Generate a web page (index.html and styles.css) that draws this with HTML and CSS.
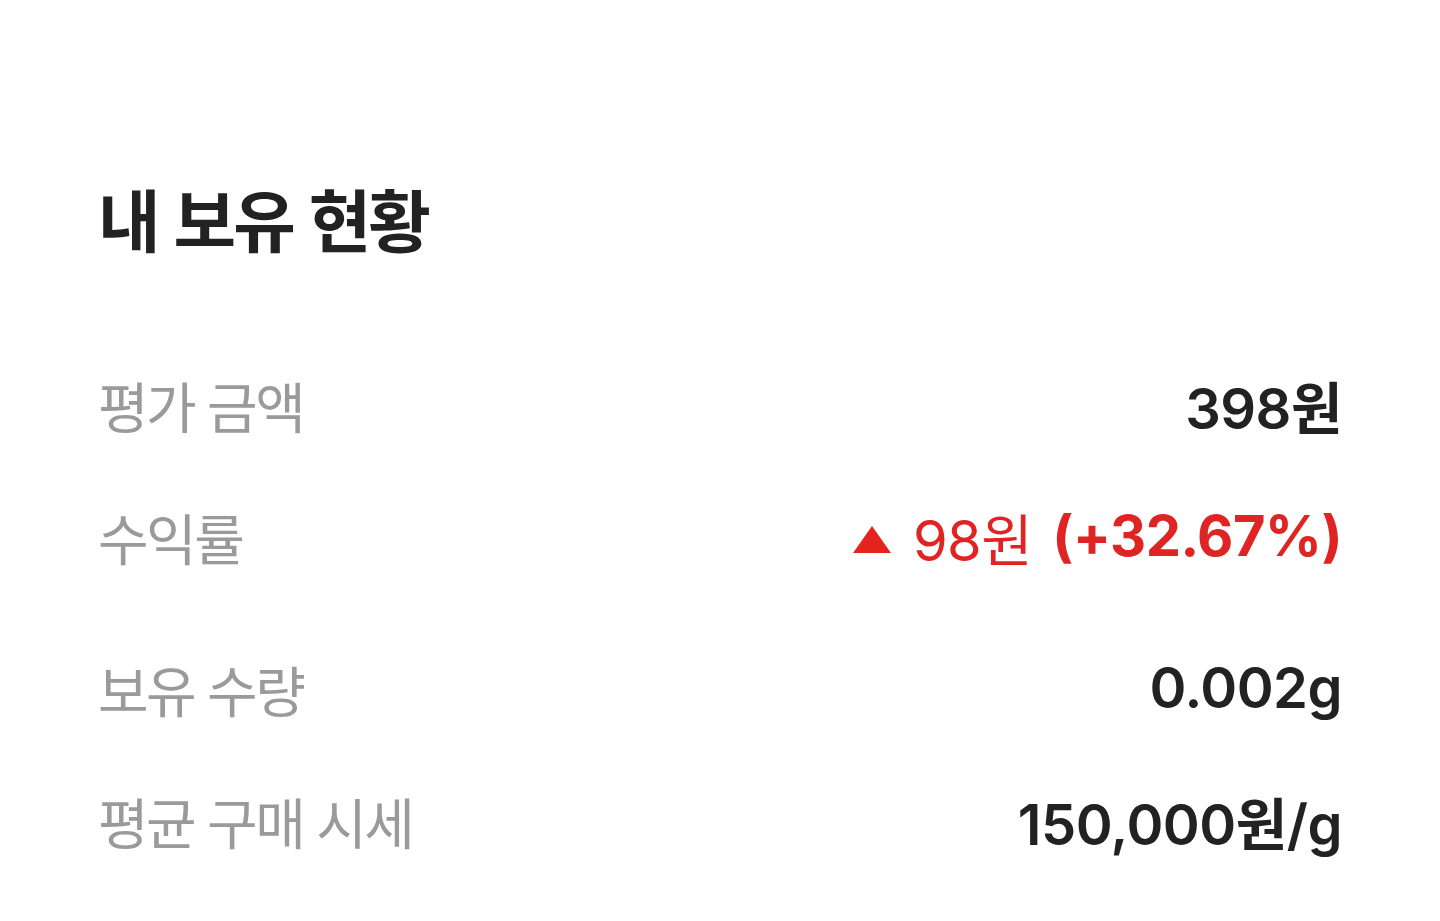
FILE: index.html
```html
<!DOCTYPE html>
<html lang="ko">
<head>
<meta charset="utf-8">
<title>내 보유 현황</title>
<link rel="stylesheet" href="styles.css">
</head>
<body>
<main class="holdings">
  <h1 class="holdings__title">내 보유 현황</h1>
  <div class="holdings__list">
    <div class="row">
      <span class="row__label">평가 금액</span>
      <span class="row__value">398원</span>
    </div>
    <div class="row">
      <span class="row__label">수익률</span>
      <span class="row__value row__value--up">
        <svg class="row__arrow" viewBox="0 0 38 27" width="38" height="27" aria-hidden="true"><polygon points="19,0 38,27 0,27" fill="#e52420"/></svg>
        <span class="row__diff">98원</span>
        <span class="row__pct">(+32.67%)</span>
      </span>
    </div>
    <div class="row row--gap">
      <span class="row__label">보유 수량</span>
      <span class="row__value">0.002g</span>
    </div>
    <div class="row">
      <span class="row__label">평균 구매 시세</span>
      <span class="row__value">150,000원/g</span>
    </div>
  </div>
</main>
</body>
</html>
```

FILE: styles.css
```css
* { box-sizing: border-box; }
html, body { margin: 0; padding: 0; background: #ffffff; }
body {
  font-family: "Noto Sans CJK KR", "Noto Sans", sans-serif;
  color: #222222;
}
.holdings {
  padding: 0 98px;
}
.holdings__title {
  margin: 0;
  padding-top: 178px;
  font-size: 68px;
  line-height: 80px;
  font-weight: 700;
  letter-spacing: -3px;
  color: #222222;
}
.holdings__list {
  display: flex;
  flex-direction: column;
  padding-top: 80px;
}
.row {
  display: flex;
  justify-content: space-between;
  align-items: center;
  height: 132px;
}
.row--gap { margin-top: 20px; }
.row__label {
  font-size: 55px;
  letter-spacing: -2.5px;
  color: #9a9a9a;
  font-weight: 400;
}
.row__value {
  font-family: "Inter", "Noto Sans CJK KR", sans-serif;
  font-size: 56px;
  font-weight: 600;
  letter-spacing: -0.5px;
  color: #222222;
  display: flex;
  align-items: center;
}
.row__value--up { color: #e02424; }
.row__arrow { margin-right: 22px; margin-top: 6px; }
.row__diff { font-weight: 400; margin-right: 20px; }
.row__pct { font-weight: 700; }
```
